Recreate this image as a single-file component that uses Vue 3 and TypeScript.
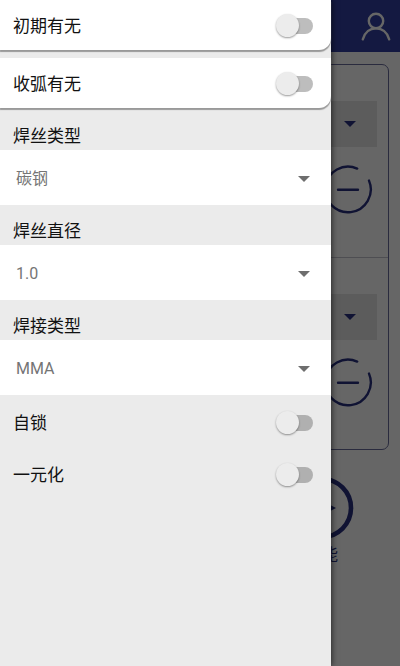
<script setup lang="ts">
import { reactive } from 'vue'

interface Choice {
  id: string
  label: string
  value: string
  options: string[]
}

interface Toggle {
  id: string
  label: string
  on: boolean
}

const cardToggles = reactive<Toggle[]>([
  { id: 'initial', label: '初期有无', on: false },
  { id: 'crater', label: '收弧有无', on: false },
])

const choices = reactive<Choice[]>([
  { id: 'wire-type', label: '焊丝类型', value: '碳钢', options: ['碳钢'] },
  { id: 'wire-size', label: '焊丝直径', value: '1.0', options: ['1.0'] },
  { id: 'weld-type', label: '焊接类型', value: 'MMA', options: ['MMA'] },
])

const toggles = reactive<Toggle[]>([
  { id: 'lock', label: '自锁', on: false },
  { id: 'unified', label: '一元化', on: false },
])

const panels = [1, 2]
</script>

<template>
  <div class="screen">
    <div class="page" inert>
      <header class="bar">
        <svg class="user" viewBox="0 0 30 30" aria-hidden="true">
          <circle cx="15" cy="10" r="7.2" />
          <path d="M1.8 28.3C4 21 9 17.4 15 17.4S26 21 28.2 28.3" />
        </svg>
      </header>
      <main class="panels">
        <section v-for="n in panels" :key="n" class="panel">
          <div class="field">
            <svg class="caret" viewBox="0 0 12 6" aria-hidden="true"><path d="M0 0h12L6 6z" /></svg>
          </div>
          <button class="minus" type="button">
            <svg viewBox="0 0 50 50" aria-hidden="true">
              <path d="M34.2 3.6A22.8 22.8 0 1 0 46 15.6M15 24.7h20" />
            </svg>
          </button>
        </section>
      </main>
      <footer class="actions">
        <button class="action" type="button">
          <svg viewBox="0 0 64 64" aria-hidden="true">
            <circle cx="32" cy="31" r="29" />
            <path d="M25 20L46 31L25 42z" />
          </svg>
          <span>功能</span>
        </button>
      </footer>
    </div>
    <div class="scrim"></div>

    <aside class="drawer">
      <div class="cards">
        <label v-for="t in cardToggles" :key="t.id" class="card">
          <span>{{ t.label }}</span>
          <input v-model="t.on" class="switch" type="checkbox" />
        </label>
      </div>
      <div v-for="c in choices" :key="c.id" class="choice">
        <label class="caption" :for="c.id">{{ c.label }}</label>
        <div class="picker">
          <select :id="c.id" v-model="c.value">
            <option v-for="o in c.options" :key="o">{{ o }}</option>
          </select>
          <svg class="caret" viewBox="0 0 12 6" aria-hidden="true"><path d="M0 0h12L6 6z" /></svg>
        </div>
      </div>
      <div class="plain">
        <label v-for="t in toggles" :key="t.id" class="row">
          <span>{{ t.label }}</span>
          <input v-model="t.on" class="switch" type="checkbox" />
        </label>
      </div>
    </aside>
  </div>
</template>

<style>
body {
  margin: 0;
}
</style>

<style scoped>
.screen {
  position: relative;
  min-height: 100vh;
  overflow: hidden;
  background: #fff;
  color: #111;
  font-family: Roboto, "Noto Sans CJK SC", sans-serif;
  font-size: 17px;
  line-height: 24px;
}

.screen * {
  box-sizing: border-box;
}

button {
  padding: 0;
  border: 0;
  background: none;
  font: inherit;
}

.bar {
  display: flex;
  align-items: center;
  justify-content: flex-end;
  height: 52px;
  padding: 0 9px;
  background: #3340a2;
}

.user {
  width: 30px;
  height: 30px;
  fill: none;
  stroke: #fff;
  stroke-width: 2.4;
  stroke-linecap: round;
}

.panels {
  margin: 12px 11px 0;
  border: 1px solid #6a6d9c;
  border-radius: 7px;
}

.panel {
  display: flex;
  flex-direction: column;
  align-items: flex-end;
  gap: 18px;
  height: 192px;
  padding: 36px 11px 0;
}

.panel + .panel {
  border-top: 1px solid #c4c4cc;
}

.field {
  display: flex;
  align-items: center;
  justify-content: flex-end;
  width: 100%;
  height: 46px;
  padding-right: 21px;
  background: #e6e6e6;
}

.caret {
  width: 12px;
  height: 6px;
  fill: #2a3180;
}

.minus {
  width: 50px;
  height: 50px;
  margin-right: 4px;
}

.minus svg {
  display: block;
  fill: none;
  stroke: #2a3180;
  stroke-width: 2.4;
  stroke-linecap: round;
}

.actions {
  display: flex;
  justify-content: flex-end;
  padding: 27px 46px 0;
}

.action {
  display: flex;
  flex-direction: column;
  align-items: center;
  gap: 2px;
  color: #2a3180;
  font-size: 16px;
}

.action svg {
  width: 64px;
  height: 64px;
  fill: none;
  stroke: #2a3180;
  stroke-width: 4.6;
}

.action path {
  fill: #2a3180;
  stroke: none;
}

.scrim {
  position: absolute;
  inset: 0;
  background: rgba(0, 0, 0, 0.6);
}

.drawer {
  position: absolute;
  inset: 0 69px 0 0;
  background: #ebebeb;
  box-shadow: 1px 0 6px rgba(0, 0, 0, 0.6);
}

.cards {
  display: flex;
  flex-direction: column;
  gap: 8px;
  padding-bottom: 2px;
}

.card,
.row {
  display: flex;
  align-items: center;
  justify-content: space-between;
  height: 52px;
  padding: 0 18px 0 13px;
}

.card {
  height: 50px;
  padding-top: 2px;
  border-radius: 0 0 12px 0;
  background: #fff;
  box-shadow: 0 2px 1px #999;
}

.caption {
  display: block;
  height: 40px;
  padding: 14px 13px 0;
}

.picker {
  display: flex;
  align-items: center;
  position: relative;
  height: 55px;
  padding-top: 2px;
  background: #fff;
}

.picker select {
  width: 100%;
  height: 100%;
  padding: 0 40px 0 16px;
  border: 0;
  appearance: none;
  background: none;
  color: #757575;
  font: inherit;
  font-size: 16px;
}

.picker .caret {
  position: absolute;
  right: 21px;
  fill: #6e6e6e;
  pointer-events: none;
}

.plain {
  padding-top: 2px;
}

.switch {
  position: relative;
  width: 33px;
  height: 16px;
  margin: 0;
  border-radius: 8px;
  appearance: none;
  background: #b0b0b0;
}

.card .switch {
  background: #bdbdbd;
}

.switch::before {
  content: "";
  position: absolute;
  top: -4px;
  left: -4px;
  width: 23px;
  height: 23px;
  border-radius: 50%;
  background: #ececec;
  box-shadow: 0 1px 2px rgba(0, 0, 0, 0.4);
}

.switch:checked::before {
  left: 14px;
}
</style>
